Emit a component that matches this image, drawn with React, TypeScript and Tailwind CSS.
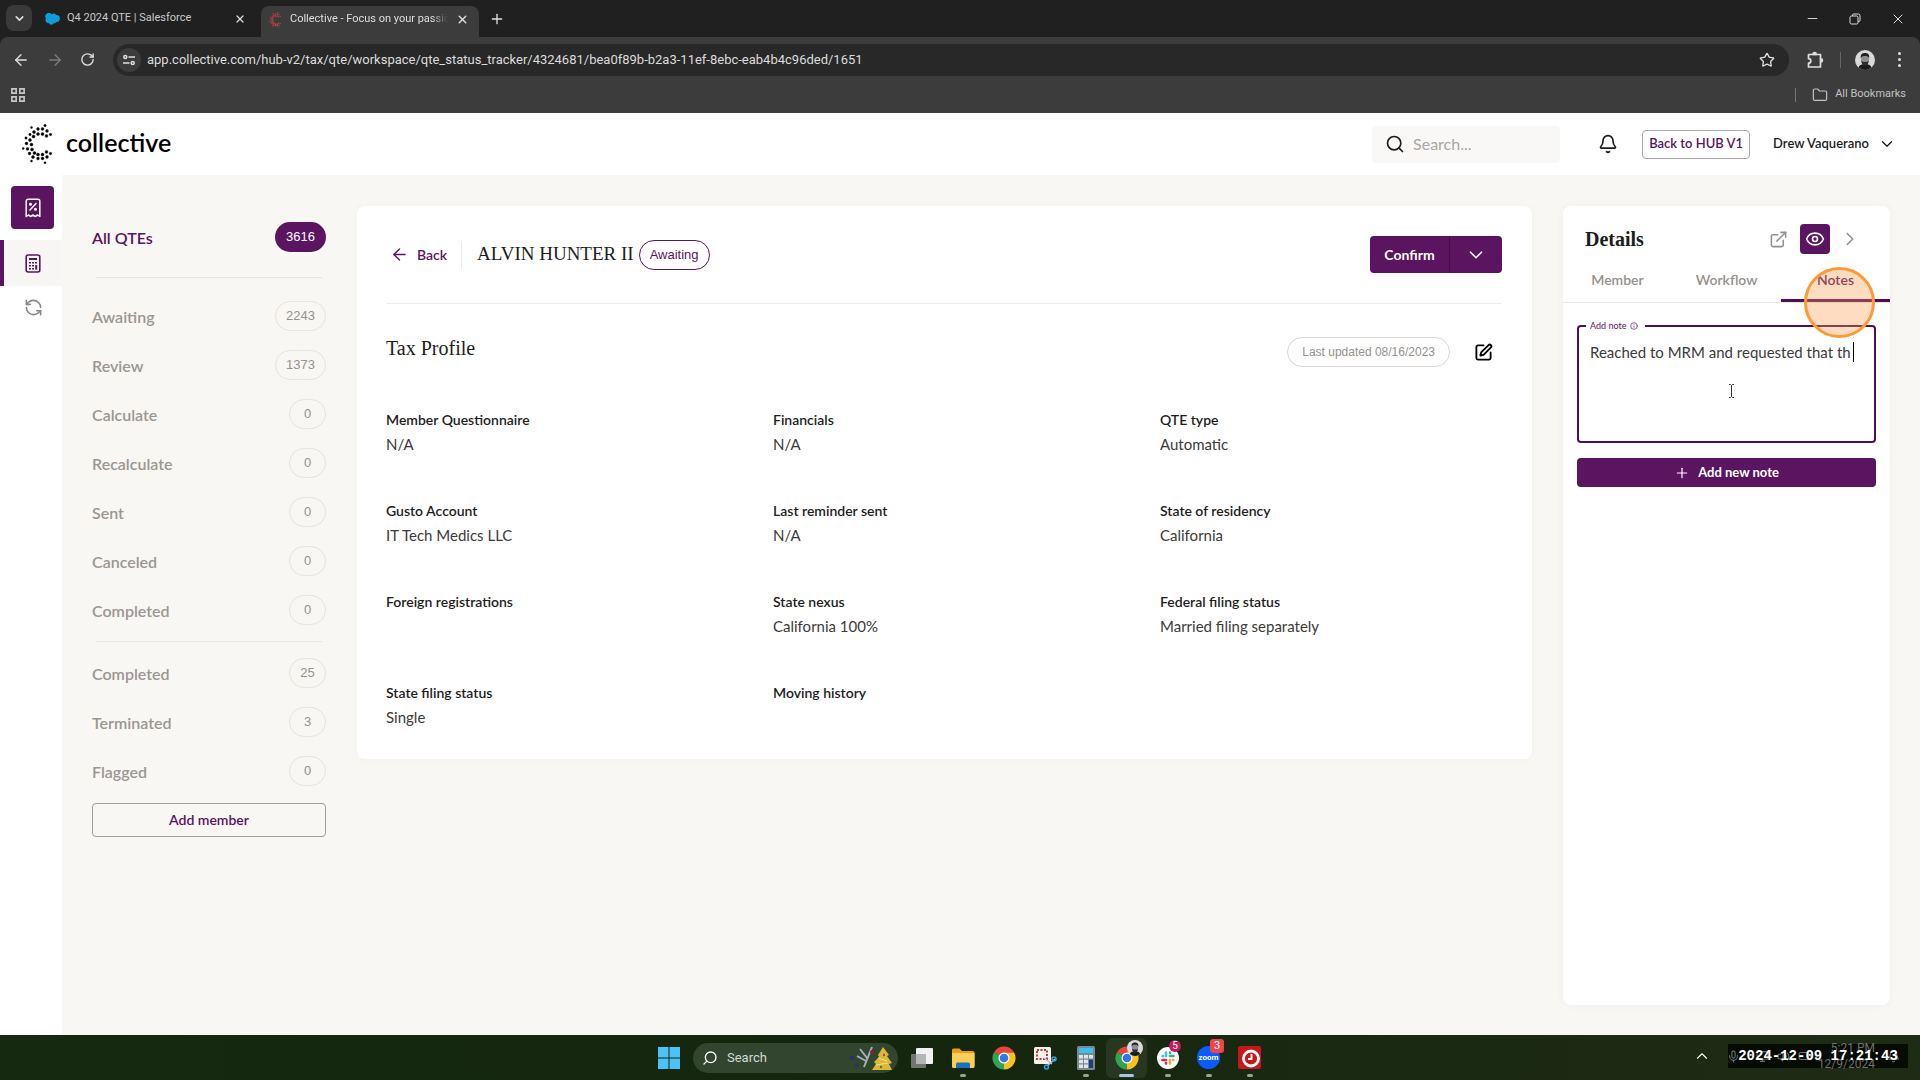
import type { ReactNode } from 'react';
import {
  ArrowLeft,
  ArrowRight,
  Battery,
  Bell,
  ChevronDown,
  ChevronRight,
  ChevronUp,
  ExternalLink,
  Eye,
  Folder,
  Info,
  Mic,
  Minus,
  Monitor,
  Plus,
  RefreshCcw,
  RotateCw,
  Search,
  SquarePen,
  Star,
  Volume2,
  X,
} from 'lucide-react';

const statuses = [
  { label: 'Awaiting', count: 2243 },
  { label: 'Review', count: 1373 },
  { label: 'Calculate', count: 0 },
  { label: 'Recalculate', count: 0 },
  { label: 'Sent', count: 0 },
  { label: 'Canceled', count: 0 },
  { label: 'Completed', count: 0 },
];

const closedStatuses = [
  { label: 'Completed', count: 25 },
  { label: 'Terminated', count: 3 },
  { label: 'Flagged', count: 0 },
];

const profileFields = [
  { label: 'Member Questionnaire', value: 'N/A' },
  { label: 'Financials', value: 'N/A' },
  { label: 'QTE type', value: 'Automatic' },
  { label: 'Gusto Account', value: 'IT Tech Medics LLC' },
  { label: 'Last reminder sent', value: 'N/A' },
  { label: 'State of residency', value: 'California' },
  { label: 'Foreign registrations', value: '' },
  { label: 'State nexus', value: 'California 100%' },
  { label: 'Federal filing status', value: 'Married filing separately' },
  { label: 'State filing status', value: 'Single' },
  { label: 'Moving history', value: '' },
];

// [x, y, r] on a 30x40 canvas
const logoDots = [
  [9.5, 3.5, 1], [23, 1.5, 1.2], [16, 5, 1.4], [20.5, 5, 1.4], [12, 8, 1.5], [25, 7, 1.4],
  [16, 10, 1.5], [20.5, 10, 1.5], [28.5, 10.5, 1.2], [24.5, 12, 1.4], [8, 10.5, 1.2], [11.5, 12.5, 1.5],
  [4, 14, 1.2], [8, 16, 1.5], [4.5, 19.5, 1.4], [9.5, 20.5, 1.5], [1.2, 24.5, 1.1], [5.5, 25, 1.4],
  [10, 25.5, 1.5], [7.5, 29.5, 1.4], [12.5, 29, 1.5], [11, 33, 1.5], [16, 30.5, 1.5], [20.5, 30.5, 1.5],
  [16, 34.5, 1.4], [20.5, 34.5, 1.4], [24.5, 28, 1.4], [28.5, 29.5, 1.2], [25, 33, 1.4], [9.5, 37, 1], [23, 38.8, 1.1],
];

function CollectiveMark({ className }: { className: string }) {
  return (
    <svg viewBox="0 0 30 40" className={className} fill="currentColor" stroke="currentColor" strokeWidth=".4" aria-hidden="true">
      {logoDots.map(([cx, cy, r]) => (
        <circle key={`${cx}-${cy}`} cx={cx} cy={cy} r={r} />
      ))}
    </svg>
  );
}

function SalesforceIcon() {
  return (
    <svg viewBox="0 0 16 12" className="h-3 w-4 shrink-0" fill="#0d9dda" aria-hidden="true">
      <path d="M6.6 1.3A3 3 0 0 1 11.300 2 3.400 3.400 0 1 1 11.500 9 2.600 2.600 0 0 1 9 10.100 3 3 0 0 1 3.700 10 2.800 2.800 0 0 1 1 5.600 3.300 3.300 0 0 1 6.600 1.300z" />
    </svg>
  );
}

function SiteSettingsIcon() {
  return (
    <svg viewBox="0 0 12 12" className="size-3" fill="none" stroke="currentColor" strokeWidth="1.5" aria-hidden="true">
      <circle cx="2.300" cy="3" r="1.500" />
      <path d="M5.500 3H12M0 9h6.500" />
      <circle cx="9.700" cy="9" r="1.500" />
    </svg>
  );
}

function AppsIcon() {
  return (
    <svg viewBox="0 0 13 13" className="size-[14px]" fill="none" stroke="#c7c7c7" strokeWidth="1.500" aria-hidden="true">
      <path d="M.8.8h4v4h-4zM8.200.8h4v4h-4zM.8 8.200h4v4h-4zM8.200 8.200h4v4h-4z" />
    </svg>
  );
}

function PuzzleIcon() {
  return (
    <svg viewBox="0 0 18 18" className="size-[18px]" fill="none" stroke="currentColor" strokeWidth="1.700" strokeLinejoin="round" aria-hidden="true">
      <path d="M2.500 3.500H14.500V16H2.500v-3.800a2.300 2.300 0 0 0 0-4.600z" />
      <path d="M7 3.300a1.600 1.600 0 0 1 3.200 0zM14.800 7.800a1.600 1.600 0 0 1 0 3.200z" fill="currentColor" />
    </svg>
  );
}

function Avatar({ className }: { className: string }) {
  return (
    <svg viewBox="0 0 20 20" className={className} aria-hidden="true">
      <circle cx="10" cy="10" r="10" fill="#d9d9d9" />
      <path d="M3.500 17.600C4.500 14.800 7 14 10 14s5.500.8 6.500 3.600A10 10 0 0 1 3.500 17.600z" fill="#1b1b1b" />
      <ellipse cx="10" cy="9.500" rx="3.900" ry="5" fill="#8d8d8d" />
      <path d="M5.800 8.500C5.300 4 7.500 3 10 3s4.700 1 4.200 5.500c-.9-2-1.700-2.500-4.200-2.500s-3.300.5-4.200 2.500z" fill="#222" />
      <path d="M6.200 10.500c.5 4 2 5.300 3.800 5.300s3.300-1.300 3.800-5.300c-.9 1.500-2 1.500-3.800 1.500s-2.900 0-3.800-1.500z" fill="#2b2b2b" />
    </svg>
  );
}

function ReceiptIcon() {
  return (
    <svg viewBox="0 0 16 20" className="h-5 w-4" fill="none" stroke="currentColor" strokeWidth="1.500" strokeLinejoin="round" aria-hidden="true">
      <path d="M1.200 18.500V3.200a2 2 0 0 1 2-2h9.600a2 2 0 0 1 2 2v15.300l-2.200-1.500-2.300 1.500L8 17l-2.300 1.500L3.400 17z" />
      <path d="M5 12l6-6.500" strokeLinecap="round" />
      <circle cx="5.500" cy="6.300" r=".8" fill="currentColor" />
      <circle cx="10.500" cy="11.300" r=".8" fill="currentColor" />
    </svg>
  );
}

function CalculatorIcon() {
  return (
    <svg viewBox="0 0 16 19" className="h-[19px] w-4" fill="none" stroke="currentColor" strokeWidth="1.600" aria-hidden="true">
      <rect x="1.200" y="1" width="13.600" height="17" rx="2" />
      <path d="M4 5h8" strokeWidth="2" />
      <path d="M4 8.800h2M7 8.800h2M10 8.800h2M4 11.800h2M7 11.800h2M4 14.800h2M7 14.800h2" />
      <path d="M11.200 11v4.600" strokeWidth="2" />
    </svg>
  );
}

function CountPill({ count }: { count: number }) {
  return (
    <span className="flex h-[30px] min-w-[37px] items-center justify-center rounded-full border border-[#e6e4e1] px-[10px] font-['Liberation_Sans',sans-serif] text-[13px] text-[#96918d]">
      {count}
    </span>
  );
}

function StatusList({ items }: { items: { label: string; count: number }[] }) {
  return (
    <ul className="space-y-[19px]">
      {items.map((item) => (
        <li key={item.label} className="flex h-[30px] items-center justify-between">
          <a href="#" className="pt-0.5 text-base font-semibold leading-6 text-[#9b9692]">
            {item.label}
          </a>
          <CountPill count={item.count} />
        </li>
      ))}
    </ul>
  );
}

function BrowserChrome() {
  return (
    <header className="bg-[#202020] font-[Roboto,sans-serif] text-[#dedede]">
      <div className="flex h-[37px] items-end">
        <button aria-label="Search tabs" className="mb-[6px] ml-[6px] flex size-[26px] items-center justify-center rounded-lg bg-[#3a3a3a]">
          <ChevronDown size={13} strokeWidth={3} />
        </button>
        <div className="ml-[13px] flex h-[37px] w-[216px] items-center">
          <SalesforceIcon />
          <span className="ml-[6px] flex-1 text-[11px] text-[#c9c9c9]">Q4 2024 QTE | Salesforce</span>
          <button aria-label="Close tab" className="mr-[15px]">
            <X size={12} strokeWidth={2.5} />
          </button>
        </div>
        <div className="flex h-[31px] w-[218px] items-center rounded-t-lg bg-[#3c3c3c] pb-1 pl-2">
          <CollectiveMark className="h-4 w-3 text-[#f04a58]" />
          <span className="ml-[9px] w-[158px] overflow-hidden whitespace-nowrap text-[11px] mask-r-from-90%">
            Collective - Focus on your passion
          </span>
          <button aria-label="Close tab" className="ml-2">
            <X size={13} strokeWidth={2.5} />
          </button>
        </div>
        <button aria-label="New tab" className="mb-[10px] ml-[10px]">
          <Plus size={16} strokeWidth={2} />
        </button>
        <div className="ml-auto flex h-full items-center gap-7 pr-[14px]">
          <button aria-label="Minimize">
            <Minus size={15} strokeWidth={1.5} />
          </button>
          <button aria-label="Restore" className="px-px">
            <svg viewBox="0 0 12 12" className="size-3" fill="none" stroke="currentColor" aria-hidden="true">
              <rect x="1" y="3" width="8" height="8" rx="1.500" />
              <path d="M3.500 3V2.200A1.200 1.200 0 0 1 4.700 1h4.600A1.700 1.700 0 0 1 11 2.700v4.600a1.200 1.200 0 0 1-1.200 1.200H9" />
            </svg>
          </button>
          <button aria-label="Close">
            <X size={16} strokeWidth={1.500} />
          </button>
        </div>
      </div>

      <div className="rounded-t-lg bg-[#3c3c3c]">
        <div className="flex h-[45px] items-center pr-3">
          <div className="flex w-[113px] items-center gap-4 pl-3">
            <button aria-label="Back"><ArrowLeft size={18} strokeWidth={1.800} /></button>
            <button aria-label="Forward" className="text-[#7b7b7b]"><ArrowRight size={18} strokeWidth={1.800} /></button>
            <button aria-label="Reload"><RotateCw size={15} strokeWidth={2.200} /></button>
          </div>
          <div className="flex h-8 flex-1 items-center rounded-full bg-[#282828] pl-1 pr-[14px]">
            <span className="flex size-6 items-center justify-center rounded-full bg-[#3c3c3c]">
              <SiteSettingsIcon />
            </span>
            <input
              aria-label="Address"
              className="ml-[6px] min-w-0 flex-1 bg-transparent text-[13px] text-[#dcdcdc] outline-none"
              defaultValue="app.collective.com/hub-v2/tax/qte/workspace/qte_status_tracker/4324681/bea0f89b-b2a3-11ef-8ebc-eab4b4c96ded/1651"
            />
            <button aria-label="Bookmark"><Star size={16} strokeWidth={2} /></button>
          </div>
          <div className="flex items-center pl-[17px]">
            <button aria-label="Extensions"><PuzzleIcon /></button>
            <span className="ml-4 h-4 w-px bg-[#666]" />
            <Avatar className="ml-[14px] size-5" />
            <button aria-label="Menu" className="ml-[15px] flex w-[18px] flex-col items-center gap-[3px]">
              <span className="size-[3px] rounded-full bg-[#dedede]" />
              <span className="size-[3px] rounded-full bg-[#dedede]" />
              <span className="size-[3px] rounded-full bg-[#dedede]" />
            </button>
          </div>
        </div>
        <div className="flex h-[31px] items-center justify-between pb-[6px] pl-[11px] pr-[14px]">
          <button aria-label="Apps"><AppsIcon /></button>
          <div className="flex items-center">
            <span className="h-[14px] w-px bg-[#777]" />
            <button className="ml-4 flex items-center gap-[7px] text-[11px] text-[#c2c2c2]">
              <Folder size={16} strokeWidth={1.800} />
              All Bookmarks
            </button>
          </div>
        </div>
      </div>
    </header>
  );
}

function AppHeader() {
  return (
    <header className="flex h-[62px] items-center bg-white pl-[22px] pr-6 text-[#1d1d1d]">
      <a href="#" className="flex items-center text-black">
        <CollectiveMark className="h-10 w-[30px]" />
        <span className="ml-[14px] pb-1 text-[25px] font-semibold leading-6">collective</span>
      </a>
      <div className="ml-auto flex h-[37px] w-[188px] items-center rounded bg-[#f9f8f6] pl-[13px]">
        <Search size={20} strokeWidth={2} />
        <input aria-label="Search" placeholder="Search..." className="ml-2 w-[130px] bg-transparent text-base outline-none placeholder:text-[#a9a6a3]" />
      </div>
      <button aria-label="Notifications" className="ml-[38px]">
        <Bell size={20} strokeWidth={2} />
      </button>
      <button className="ml-6 h-[29px] w-[108px] rounded border border-[#a9a5ab] text-[13px] font-semibold text-[#5b145f]">
        Back to HUB V1
      </button>
      <button className="ml-[23px] flex items-center gap-[9px] text-[13px] font-semibold">
        Drew Vaquerano
        <ChevronDown size={18} strokeWidth={1.800} />
      </button>
    </header>
  );
}

function Rail() {
  return (
    <nav className="flex w-[62px] shrink-0 flex-col bg-white pt-[11px]">
      <button aria-label="Taxes" className="ml-[11px] flex size-[43px] items-center justify-center rounded bg-[#5b145f] text-white">
        <ReceiptIcon />
      </button>
      <button aria-label="Quarterly estimates" className="mt-[11px] flex h-[46px] items-center justify-center border-l-4 border-[#5b145f] bg-[#f8f6f5] text-[#5b145f]">
        <CalculatorIcon />
      </button>
      <button aria-label="Refresh" className="mt-3 flex justify-center pl-1 text-[#8c8782]">
        <RefreshCcw size={19} strokeWidth={2} />
      </button>
    </nav>
  );
}

function Sidebar() {
  return (
    <aside className="ml-[30px] w-[234px] shrink-0 pt-[47px]">
      <div className="flex h-[30px] items-center justify-between">
        <h2 className="pt-0.5 text-base font-semibold text-[#5b145f]">All QTEs</h2>
        <span className="flex h-[30px] items-center rounded-full bg-[#5b145f] px-[11px] font-['Liberation_Sans',sans-serif] text-[13px] text-white">
          3616
        </span>
      </div>
      <hr className="mx-1 mb-[23px] mt-[25px] border-[#e9e7e4]" />
      <StatusList items={statuses} />
      <hr className="mx-1 my-4 border-[#e9e7e4]" />
      <StatusList items={closedStatuses} />
      <button className="mt-[17px] h-[34px] w-full rounded border border-[#a09ca0] text-sm font-semibold text-[#5b145f]">
        Add member
      </button>
    </aside>
  );
}

function MemberCard() {
  return (
    <main className="ml-[31px] mt-[31px] min-w-0 flex-1 self-start rounded-lg bg-white pb-[30px] pl-[29px] pr-[30px] pt-[30px] shadow-[0_0_8px_rgba(0,0,0,0.03)]">
      <div className="flex h-[37px] items-center">
        <button className="ml-1 flex items-center gap-2 text-sm font-semibold text-[#5b145f]">
          <ArrowLeft size={19} strokeWidth={1.800} />
          Back
        </button>
        <span className="ml-[14px] h-7 w-px bg-[#ecebe9]" />
        <h1 className="ml-[15px] font-['Liberation_Serif',serif] text-[19px]">ALVIN HUNTER II</h1>
        <span className="ml-[5px] flex h-[30px] items-center rounded-full border border-[#5b145f] px-[10px] font-['Liberation_Sans',sans-serif] text-[13px] text-[#5b145f]">
          Awaiting
        </span>
        <div className="ml-auto flex h-[37px] overflow-hidden rounded bg-[#5b145f] text-white">
          <button className="w-20 border-r border-[#470d4b] text-sm font-bold">Confirm</button>
          <button aria-label="More actions" className="flex w-[52px] items-center justify-center">
            <ChevronDown size={22} strokeWidth={1.800} />
          </button>
        </div>
      </div>
      <hr className="mt-[30px] border-[#ecebe9]" />
      <div className="mt-[33px] flex h-[30px] items-center">
        <h2 className="pb-2 font-['Liberation_Serif',serif] text-xl">Tax Profile</h2>
        <span className="ml-auto flex h-[30px] items-center rounded-full border border-[#d9d7d5] px-[14px] font-['Liberation_Sans',sans-serif] text-xs text-[#96918d]">
          Last updated 08/16/2023
        </span>
        <button aria-label="Edit tax profile" className="ml-6 mr-[9px] text-black">
          <SquarePen size={19} strokeWidth={2.300} />
        </button>
      </div>
      <dl className="mt-[41px] grid grid-cols-3 gap-x-[45px] gap-y-[43px]">
        {profileFields.map((field) => (
          <div key={field.label} className="h-12">
            <dt className="text-sm font-semibold leading-6 text-[#1d1d1d]">{field.label}</dt>
            <dd className="text-[15px] leading-6 text-[#3c3a3a]">{field.value}</dd>
          </div>
        ))}
      </dl>
    </main>
  );
}

function DetailsPanel() {
  return (
    <aside className="relative mb-[30px] ml-[31px] mr-[30px] mt-[31px] w-[327px] shrink-0 rounded-lg bg-white shadow-[0_0_8px_rgba(0,0,0,0.04)]">
      <div className="flex h-[66px] items-center pl-[22px] pr-[29px]">
        <h2 className="flex-1 font-['Liberation_Serif',serif] text-xl font-bold">Details</h2>
        <button aria-label="Open in new tab" className="text-[#96918d]">
          <ExternalLink size={19} strokeWidth={2} />
        </button>
        <button aria-label="Preview" className="ml-3 flex size-[30px] items-center justify-center rounded bg-[#5b145f] text-white">
          <Eye size={20} strokeWidth={2} />
        </button>
        <button aria-label="Collapse" className="ml-[9px] text-[#96918d]">
          <ChevronRight size={22} strokeWidth={1.800} />
        </button>
      </div>
      <div role="tablist" className="grid h-[31px] grid-cols-3 border-b border-[#e9e7e4] text-sm font-semibold leading-4 text-[#96918d]">
        <button role="tab" className="pb-[14px]">Member</button>
        <button role="tab" className="pb-[14px]">Workflow</button>
        <button role="tab" aria-selected="true" className="border-b-[3px] border-[#4c1050] pb-[11px] text-[#5b145f]">
          Notes
        </button>
      </div>

      <div className="px-[14px] pt-[15px]">
        <fieldset className="relative h-[125px] rounded border-2 border-[#4c1050] px-[11px]">
          <legend className="-ml-1 px-1 text-[9px] leading-4 text-[#5b145f]">
            <label htmlFor="note" className="flex items-center gap-1 pr-[3px]">
              Add note
              <Info size={8} strokeWidth={2} />
            </label>
          </legend>
          <textarea
            id="note"
            className="block h-24 w-full resize-none overflow-hidden bg-transparent pt-[6px] text-[15px] leading-6 text-[#3c3a3a] outline-none"
            defaultValue="Reached to MRM and requested that th"
          />
          <span className="absolute right-5 top-2 h-5 w-px bg-black" />
          <svg viewBox="0 0 7 14" className="absolute left-[149px] top-[50px] h-[14px] w-[7px]" fill="none" stroke="#333" aria-hidden="true">
            <path d="M1 .5h1.500L3.500 1.500 4.500.5H6M3.500 1.500v11M1 13.500h1.500l1-1 1 1H6" />
          </svg>
        </fieldset>
        <button className="mt-[15px] flex h-[29px] w-full items-center justify-center gap-2 rounded bg-[#5b145f] text-[13px] font-bold text-white">
          <Plus size={16} strokeWidth={1.800} />
          Add new note
        </button>
      </div>

      <span className="pointer-events-none absolute right-[15px] top-[61px] size-[71px] rounded-full border-[3px] border-[#ff9a36] bg-[#fa9a50]/35" />
    </aside>
  );
}

function ChromeLogo() {
  return (
    <svg viewBox="0 0 24 24" className="size-6" aria-hidden="true">
      <path d="M12 12 2.040 6.250A11.500 11.500 0 0 1 21.960 6.250z" fill="#e8453c" />
      <path d="M12 12 21.960 6.250A11.500 11.500 0 0 1 12 23.500z" fill="#f9c11b" />
      <path d="M12 12v11.500A11.500 11.500 0 0 1 2.040 6.250z" fill="#34a351" />
      <path d="M12 6.500h10.100l-4.200 8.800z" fill="#f9c11b" />
      <path d="M12 6.500h10.100l-.2-.4H12z" fill="#e8453c" />
      <circle cx="12" cy="12" r="5.500" fill="#fff" />
      <circle cx="12" cy="12" r="4.300" fill="#3378e8" />
    </svg>
  );
}

function TaskButton({ label, children, state }: { label: string; children: ReactNode; state?: 'open' | 'active' }) {
  return (
    <button
      aria-label={label}
      className={`relative flex h-10 w-[41px] items-center justify-center rounded-md ${state === 'active' ? 'bg-white/8' : ''}`}
    >
      {children}
      {state === 'open' && <span className="absolute bottom-px h-[3px] w-[6px] rounded-full bg-[#98a396]" />}
      {state === 'active' && <span className="absolute bottom-px h-[3px] w-[15px] rounded-full bg-[#a9c4ea]" />}
    </button>
  );
}

function Taskbar() {
  return (
    <footer className="relative flex h-[45px] items-center justify-center bg-linear-to-r from-[#14290f] via-[#15260f] to-[#1f2c15] font-[Roboto,sans-serif] text-white">
      <div className="flex items-center pl-2">
        <button aria-label="Start">
          <svg viewBox="0 0 22 22" className="size-[22px]" fill="#4cc2f7" aria-hidden="true">
            <path d="M0 0h10.500v10.500H0zM11.500 0H22v10.500H11.500zM0 11.500h10.500V22H0zM11.500 11.500H22V22H11.500z" />
          </svg>
        </button>
        <div className="ml-[13px] flex h-[30px] w-[205px] items-center rounded-full bg-[#31452f] pl-[9px] pr-1">
          <Search size={16} strokeWidth={2} className="-scale-x-100" />
          <input aria-label="Search Windows" placeholder="Search" className="ml-[9px] w-[110px] bg-transparent text-[13px] outline-none placeholder:text-[#d5d9d4]" />
          <svg viewBox="0 0 46 28" className="ml-auto h-7 w-[46px]" aria-hidden="true">
            <path d="M12 5l7 9M24 3l-8 20M9 12l9 5" stroke="#a9aeb8" strokeWidth="2" />
            <circle cx="4" cy="14" r="2.500" fill="#28326b" />
            <circle cx="9" cy="21" r="2" fill="#28326b" />
            <circle cx="24" cy="8" r="2" fill="#7c2733" />
            <path d="M35 3l6 8-2 1 5 7-3 1 3 6H24l4-6-2-2 5-5-1-2z" fill="#d9b83a" />
            <path d="M30 14l9 3M28 21l12-2" stroke="#f2e27b" />
            <circle cx="36" cy="11" r="1.200" fill="#d63b2f" />
            <circle cx="33" cy="23" r="1.200" fill="#3f7d35" />
          </svg>
        </div>
        <div className="ml-[3px] flex items-center">
          <TaskButton label="Task view">
            <svg viewBox="0 0 24 24" className="size-6" aria-hidden="true">
              <rect x="1" y="8" width="15" height="14" rx="1" fill="#6f7670" />
              <rect x="6" y="2" width="17" height="16" rx="1" fill="#f1f1f1" />
              <path d="M6 8h10v10H6z" fill="#b4b6b4" />
            </svg>
          </TaskButton>
          <TaskButton label="File Explorer" state="open">
            <svg viewBox="0 0 24 24" className="size-6" aria-hidden="true">
              <path d="M1 4a1.500 1.500 0 0 1 1.500-1.500h6L11 5h11a1.500 1.500 0 0 1 1.500 1.500V20H1z" fill="#e3a21b" />
              <path d="M1 7h22.500v13.500A1.500 1.500 0 0 1 22 22H2.500A1.500 1.500 0 0 1 1 20.500z" fill="#fbcf55" />
              <path d="M5 22v-4a1.500 1.500 0 0 1 1.500-1.500h11A1.500 1.500 0 0 1 19 18v4z" fill="#1c6fc4" />
            </svg>
          </TaskButton>
          <TaskButton label="Chrome"><ChromeLogo /></TaskButton>
          <TaskButton label="Snipping Tool">
            <svg viewBox="0 0 24 24" className="size-6" fill="none" aria-hidden="true">
              <rect x="1" y="1" width="17" height="17" rx="1.500" fill="#f4f1ef" />
              <rect x="4" y="4" width="10" height="9" stroke="#c3372f" strokeWidth="2" strokeDasharray="2 1.500" />
              <path d="M11 12l8 6M22 13l-8 7" stroke="#b9c3cc" strokeWidth="1.500" />
              <circle cx="21" cy="13" r="2" stroke="#2fa1e0" strokeWidth="1.500" />
              <circle cx="13.500" cy="21" r="2" stroke="#2fa1e0" strokeWidth="1.500" />
            </svg>
          </TaskButton>
          <TaskButton label="Calculator" state="open">
            <svg viewBox="0 0 18 24" className="h-6 w-[18px]" aria-hidden="true">
              <rect width="18" height="24" y="0" rx="1.500" fill="#7c8790" />
              <rect x="2" y="2" width="14" height="5" fill="#37c2ee" />
              <path d="M2 9h4v3.500H2zM7 9h4v3.500H7zM12 9h4v3.500h-4zM2 13.700h4v3.500H2zM7 13.700h4v3.500H7zM2 18.400h4V22H2zM7 18.400h4V22H7z" fill="#dfe4e8" />
              <path d="M12 13.700h4V22h-4z" fill="#1d3f77" />
            </svg>
          </TaskButton>
          <TaskButton label="Chrome, Drew" state="active">
            <ChromeLogo />
            <Avatar className="absolute right-1 top-[2px] size-4" />
          </TaskButton>
          <TaskButton label="Slack" state="open">
            <svg viewBox="0 0 22 22" className="size-[22px]" strokeWidth="2.600" strokeLinecap="round" aria-hidden="true">
              <circle cx="11" cy="11" r="11" fill="#fff" />
              <path d="M9 5.500V9M5.500 9H6" stroke="#36c5f0" />
              <path d="M13 9h3.500M13 5.500V6" stroke="#2eb67d" />
              <path d="M13 13v3.500M16.500 13H16" stroke="#ecb22e" />
              <path d="M9 13H5.500M9 16.500V16" stroke="#e01e5a" />
            </svg>
            <span className="absolute right-[7px] top-[2px] flex size-3 items-center justify-center rounded-full bg-[#c8175d] text-[10px] leading-none">5</span>
          </TaskButton>
          <TaskButton label="Zoom" state="open">
            <span className="flex size-[23px] items-center justify-center rounded-full bg-[#0b5cff] text-[8px] font-bold leading-none">zoom</span>
            <span className="absolute right-[5px] top-px flex size-[14px] items-center justify-center rounded-[3px] bg-[#f0444b] text-[11px] leading-none">3</span>
          </TaskButton>
          <TaskButton label="Time tracker" state="open">
            <svg viewBox="0 0 23 23" className="size-[23px]" fill="none" aria-hidden="true">
              <rect width="23" height="23" rx="2" fill="#c8161d" />
              <circle cx="13" cy="12.500" r="7.500" stroke="#fff" strokeWidth="2.800" />
              <path d="M13.500 8v5H10" stroke="#fff" strokeWidth="2" />
            </svg>
          </TaskButton>
        </div>
      </div>

      <div className="absolute right-3 top-[9px] flex items-center">
        <button aria-label="Show hidden icons" className="mr-[17px]">
          <ChevronUp size={18} strokeWidth={1.500} />
        </button>
        <div className="relative flex h-6 w-[180px] items-center justify-center bg-[#060b04] text-[#6d706b]">
          <div className="absolute inset-0 flex items-center">
            <Mic size={13} className="-ml-px" />
            <Monitor size={13} className="ml-4" />
            <Volume2 size={13} className="ml-2" />
            <Battery size={14} className="ml-2" />
            <div className="ml-auto mr-3 text-right text-xs leading-4">
              <p>5:21 PM</p>
              <p>12/9/2024</p>
            </div>
            <Bell size={13} className="mr-2" />
          </div>
          <time className="relative whitespace-nowrap font-['Liberation_Mono',monospace] text-sm font-bold text-white">
            2024-12-09 17:21:43
          </time>
        </div>
      </div>
    </footer>
  );
}

export default function App() {
  return (
    <div className="flex min-h-screen flex-col bg-[#f8f7f4] font-[Lato,sans-serif] text-[#1d1d1d]">
      <BrowserChrome />
      <AppHeader />
      <div className="flex flex-1">
        <Rail />
        <Sidebar />
        <MemberCard />
        <DetailsPanel />
      </div>
      <Taskbar />
    </div>
  );
}
